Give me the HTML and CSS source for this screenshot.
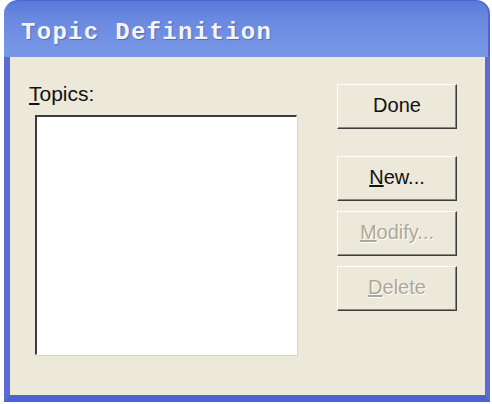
FILE: index.html
```html
<!DOCTYPE html>
<html lang="en">
    <head>
        <meta charset="UTF-8">
        <title>Topic Definition</title>
        <link rel="stylesheet" href="styles.css">
    </head>
    <body>
        <div class="window">
            <div class="title-bar">Topic Definition</div>
            <div class="dialog">
                <div class="topics-col">
                    <label class="topics-label"><u>T</u>opics:</label>
                    <div class="listbox"></div>
                </div>
                <div class="button-col">
                    <button class="btn btn-done">Done</button>
                    <button class="btn"><u>N</u>ew...</button>
                    <button class="btn" disabled><u>M</u>odify...</button>
                    <button class="btn" disabled><u>D</u>elete</button>
                </div>
            </div>
        </div>
    </body>
</html>
```

FILE: styles.css
```css
:root {
    --xp-face: #ece9da;
    --xp-frame: #5a6bd6;
    --xp-dark: #3c3c3c;
}

body {
    margin: 0;
    background: #fff;
    font-family: 'Liberation Sans', Arial, sans-serif;
}

.window {
    margin-left: 4px;
    width: 486px;
    height: 402px;
    display: flex;
    flex-direction: column;
}

.title-bar {
    height: 57px;
    box-sizing: border-box;
    padding: 18px 0 0 17px;
    border-radius: 14px 14px 0 0;
    background: linear-gradient(to bottom, #5b78da 0%, #6988e0 30%, #7593e5 75%, #7a97e7 100%);
    border-top: 1px solid #4f66d0;
    border-right: 2px solid #5a62d2;
    color: #f4f4f4;
    font-family: 'Liberation Mono', 'DejaVu Sans Mono', monospace;
    font-weight: bold;
    font-size: 24px;
    letter-spacing: 1.3px;
    text-shadow: 1px 1px 1px rgba(40, 50, 120, 0.4);
}

.dialog {
    flex: 1;
    display: flex;
    background: var(--xp-face);
    border-left: 6px solid var(--xp-frame);
    border-right: 5px solid var(--xp-frame);
    border-bottom: 7px solid #4f60d2;
}

.topics-col {
    padding: 25px 0 0 19px;
    display: flex;
    flex-direction: column;
}

.topics-label {
    font-size: 21px;
    line-height: 24px;
    color: #111;
}

.listbox {
    margin: 9px 0 0 6px;
    width: 259px;
    height: 237px;
    background: #fefefe;
    border-top: 2px solid var(--xp-dark);
    border-left: 2px solid var(--xp-dark);
    border-right: 1px solid #fff;
    border-bottom: 1px solid #fff;
    box-shadow: 1px 1px 0 #d8d4c6;
}

.button-col {
    margin-left: 40px;
    padding-top: 27px;
    display: flex;
    flex-direction: column;
    gap: 10px;
}

.btn {
    width: 120px;
    height: 45px;
    background: var(--xp-face);
    border: 1px solid;
    border-color: #fff var(--xp-dark) var(--xp-dark) #fff;
    box-shadow: inset -1px -1px 0 #8a877c;
    font-family: 'Liberation Sans', Arial, sans-serif;
    font-size: 20px;
    color: #111;
    padding: 0 0 2px;
}

.btn-done {
    margin-bottom: 17px;
}

.btn:disabled {
    color: #aca899;
    text-shadow: 1px 1px 0 #fff;
}
```
